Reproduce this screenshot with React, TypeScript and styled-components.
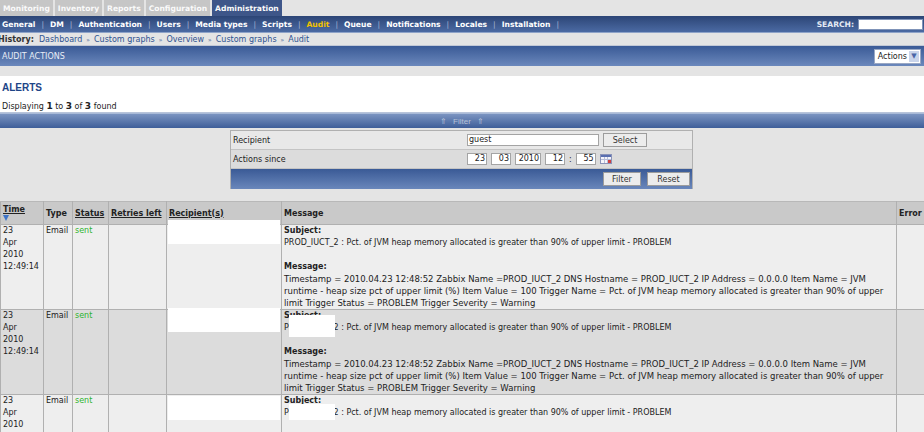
import React from 'react';
import styled, { createGlobalStyle } from 'styled-components';

const GlobalStyle = createGlobalStyle`
  html, body { margin: 0; padding: 0; }
  body {
    background: #e4e4e4;
    font-family: "DejaVu Sans", Verdana, sans-serif;
    font-size: 8px;
    color: #222;
    width: 924px;
    height: 432px;
    overflow: hidden;
  }
`;

const TabBar = styled.div`
  display: flex;
  gap: 2px;
  height: 16px;
  font-size: 7.6px;
`;

const Tab = styled.div<{ $active?: boolean }>`
  display: flex;
  align-items: center;
  padding: 0 3px;
  font-weight: bold;
  color: #fafafa;
  background: ${(p) => (p.$active ? '#3e5689' : '#c6c6c6')};
`;

const MainNav = styled.div`
  display: flex;
  align-items: center;
  height: 16px;
  padding-left: 2px;
  font-size: 7.6px;
  background: linear-gradient(#2c4576, #4b6aa3);
  border-bottom: 1px solid #8ea3c8;
`;

const NavItem = styled.span<{ $current?: boolean }>`
  font-weight: bold;
  color: ${(p) => (p.$current ? '#f2c200' : '#ffffff')};
`;

const NavSep = styled.span`
  color: #a9b7d4;
  margin: 0 6px;
`;

const Search = styled.div`
  margin-left: auto;
  display: flex;
  align-items: center;
  gap: 4px;
  font-weight: bold;
  color: #e4eaf4;
`;

const SearchInput = styled.input`
  width: 63px;
  height: 9px;
  padding: 0;
  margin: 0 1px 0 0;
  border: 1px solid #7f93b8;
  background: #fff;
`;

const HistoryBar = styled.div`
  display: flex;
  align-items: center;
  height: 12px;
  border-bottom: 1px solid #c2c8d6;
`;

const HistoryLabel = styled.span`
  font-weight: bold;
  color: #333;
  margin-left: -2px;
  margin-right: 5px;
`;

const Crumb = styled.span`
  color: #2f5390;
`;

const CrumbSep = styled.span`
  color: #2f5390;
  margin: 0 4px;
  font-size: 6px;
`;

const PageHeader = styled.div`
  display: flex;
  align-items: center;
  justify-content: space-between;
  height: 20px;
  padding: 0 3px 0 2px;
  background: linear-gradient(#3a5a96, #6b88bc);
  color: #e8edf6;
`;

const ActionsSelect = styled.div`
  display: flex;
  align-items: center;
  gap: 2px;
  height: 13px;
  padding: 0 1px 0 3px;
  background: #fff;
  border: 1px solid #9aa8c4;
  color: #222;
`;

const SelectArrow = styled.span`
  display: flex;
  align-items: center;
  justify-content: center;
  width: 10px;
  height: 11px;
  background: #c9d4ea;
  color: #4a66a8;
  font-size: 7px;
`;

const Spacer = styled.div`
  height: 10px;
`;

const AlertsBox = styled.div`
  background: #fff;
  height: 36px;
  padding-left: 2px;
  border-bottom: 1px solid #b8c4da;
  display: flex;
  flex-direction: column;
`;

const AlertsTitle = styled.div`
  font-family: "Liberation Sans", Arial, sans-serif;
  font-weight: bold;
  font-size: 10px;
  color: #1d4587;
  margin-top: 6px;
  height: 13px;
`;

const Displaying = styled.div`
  margin-top: 6px;
  color: #222;
  b { font-size: 9px; }
`;

const FilterBar = styled.div`
  height: 14px;
  display: flex;
  align-items: center;
  justify-content: center;
  gap: 6px;
  background: linear-gradient(#7b94c1, #3e5e99);
  border-top: 1px solid #a9bad8;
  color: #b7c2d8;
  font-family: "Liberation Sans Narrow", "Liberation Sans", Arial, sans-serif;
  font-size: 8px;
`;

const FilterArea = styled.div`
  display: flex;
  justify-content: center;
  height: 68px;
`;

const FilterForm = styled.div`
  width: 461px;
  margin-left: -1px;
  margin-top: 2px;
  border: 1px solid #b0b0b0;
  display: grid;
  grid-template-columns: 235px 1fr;
  grid-auto-rows: 19px;
  align-self: flex-start;
`;

const FormLabel = styled.div<{ $alt?: boolean }>`
  display: flex;
  align-items: center;
  padding-left: 2px;
  background: ${(p) => (p.$alt ? '#dcdcdc' : '#e8e8e8')};
  border-bottom: 1px solid #c4c4c4;
`;

const FormValue = styled.div<{ $alt?: boolean }>`
  display: flex;
  align-items: center;
  gap: 4px;
  padding-left: 1px;
  background: ${(p) => (p.$alt ? '#dcdcdc' : '#e8e8e8')};
  border-bottom: 1px solid #c4c4c4;
`;

const TextBox = styled.div<{ $w: number }>`
  width: ${(p) => p.$w}px;
  height: 10px;
  line-height: 10px;
  background: #fff;
  border: 1px solid #a4a4a4;
  padding: 0 1px;
  color: #222;
`;

const DateBox = styled(TextBox)`
  text-align: right;
`;

const Button = styled.div<{ $w: number }>`
  width: ${(p) => p.$w}px;
  height: 12px;
  display: flex;
  align-items: center;
  justify-content: center;
  background: #ececec;
  border: 1px solid #9c9c9c;
  color: #333;
`;

const FormFooter = styled.div`
  grid-column: 1 / span 2;
  display: flex;
  align-items: center;
  justify-content: flex-end;
  gap: 6px;
  padding-right: 2px;
  background: linear-gradient(#3a5a96, #6a87bb);
  height: 20px;
`;

const Table = styled.table`
  margin-top: 5px;
  width: 924px;
  border-collapse: collapse;
  table-layout: fixed;
  font-size: 8px;
`;

const Th = styled.th<{ $link?: boolean }>`
  text-align: left;
  font-weight: bold;
  background: #c9c9c9;
  border: 1px solid #b0b0b0;
  border-top: 1px solid #b8b8b8;
  height: 22px;
  padding: 0 2px;
  vertical-align: middle;
  white-space: nowrap;
  overflow: hidden;
  text-decoration: ${(p) => (p.$link ? 'underline' : 'none')};
  color: #222;
`;

const SortArrow = styled.div`
  width: 0;
  height: 0;
  border-left: 3px solid transparent;
  border-right: 3px solid transparent;
  border-top: 6px solid #3f74c8;
  margin-top: 1px;
`;

const Tr = styled.tr<{ $alt?: boolean }>`
  background: ${(p) => (p.$alt ? '#dcdcdc' : '#eeeeee')};
`;

const Td = styled.td`
  border: 1px solid #b0b0b0;
  border-top: none;
  vertical-align: top;
  padding: 0 1px 0 2px;
  line-height: 12px;
  height: 84px;
  position: relative;
  overflow: visible;
`;

const Line = styled.div`
  white-space: nowrap;
`;

const BodyLine = styled.div`
  white-space: nowrap;
  font-size: 8.5px;
`;

const Sent = styled.span`
  color: #2fb42f;
`;

const MsgHead = styled.div`
  font-weight: bold;
`;

const MsgGap = styled.div`
  height: 12px;
`;

const Redact = styled.div<{ $top: number; $left: number; $w: number; $h: number }>`
  position: absolute;
  top: ${(p) => p.$top}px;
  left: ${(p) => p.$left}px;
  width: ${(p) => p.$w}px;
  height: ${(p) => p.$h}px;
  background: #fff;
`;

const Calendar = () => (
  <svg width="12" height="10" viewBox="0 0 12 10">
    <rect x="0.5" y="0.5" width="11" height="9" fill="#f4f4fa" stroke="#8a93b8" />
    <rect x="1" y="1" width="10" height="2" fill="#5a6fb0" />
    <line x1="1" y1="5.5" x2="11" y2="5.5" stroke="#b8bed8" />
    <line x1="4.5" y1="3" x2="4.5" y2="9" stroke="#b8bed8" />
    <line x1="7.5" y1="3" x2="7.5" y2="9" stroke="#b8bed8" />
    <rect x="8" y="6" width="3" height="3" fill="#d04040" />
  </svg>
);

const navItems = ['General', 'DM', 'Authentication', 'Users', 'Media types', 'Scripts', 'Audit', 'Queue', 'Notifications', 'Locales', 'Installation'];
const crumbs = ['Dashboard', 'Custom graphs', 'Overview', 'Custom graphs', 'Audit'];

const rows = [
  { alt: false, recTop: -5, subj: null as null | { top: number; h: number } },
  { alt: true, recTop: -2, subj: { top: 5, h: 22 } },
  { alt: false, recTop: 1, subj: { top: 9, h: 16 } },
];

export default function App() {
  return (
    <>
      <GlobalStyle />
      <TabBar>
        <Tab>Monitoring</Tab>
        <Tab>Inventory</Tab>
        <Tab>Reports</Tab>
        <Tab>Configuration</Tab>
        <Tab $active>Administration</Tab>
      </TabBar>
      <MainNav>
        {navItems.map((n) => (
          <React.Fragment key={n}>
            <NavItem $current={n === 'Audit'}>{n}</NavItem>
            <NavSep>|</NavSep>
          </React.Fragment>
        ))}
        <Search>
          SEARCH:
          <SearchInput />
        </Search>
      </MainNav>
      <HistoryBar>
        <HistoryLabel>History:</HistoryLabel>
        {crumbs.map((c, i) => (
          <React.Fragment key={i}>
            {i > 0 && <CrumbSep>»</CrumbSep>}
            <Crumb>{c}</Crumb>
          </React.Fragment>
        ))}
      </HistoryBar>
      <PageHeader>
        <span>AUDIT ACTIONS</span>
        <ActionsSelect>
          Actions
          <SelectArrow>▼</SelectArrow>
        </ActionsSelect>
      </PageHeader>
      <Spacer />
      <AlertsBox>
        <AlertsTitle>ALERTS</AlertsTitle>
        <Displaying>
          Displaying <b>1</b> to <b>3</b> of <b>3</b> found
        </Displaying>
      </AlertsBox>
      <FilterBar>
        <span>⇑</span>
        <span>Filter</span>
        <span>⇑</span>
      </FilterBar>
      <FilterArea>
        <FilterForm>
          <FormLabel>Recipient</FormLabel>
          <FormValue>
            <TextBox $w={128}>guest</TextBox>
            <Button $w={42}>Select</Button>
          </FormValue>
          <FormLabel $alt>Actions since</FormLabel>
          <FormValue $alt>
            <DateBox $w={16}>23</DateBox>
            <DateBox $w={16}>03</DateBox>
            <DateBox $w={22}>2010</DateBox>
            <DateBox $w={16}>12</DateBox>
            <span>:</span>
            <DateBox $w={16}>55</DateBox>
            <Calendar />
          </FormValue>
          <FormFooter>
            <Button $w={36}>Filter</Button>
            <Button $w={41}>Reset</Button>
          </FormFooter>
        </FilterForm>
      </FilterArea>
      <Table>
        <colgroup>
          <col style={{ width: 43 }} />
          <col style={{ width: 29 }} />
          <col style={{ width: 36 }} />
          <col style={{ width: 58 }} />
          <col style={{ width: 115 }} />
          <col style={{ width: 615 }} />
          <col style={{ width: 28 }} />
        </colgroup>
        <thead>
          <tr>
            <Th $link>
              Time
              <SortArrow />
            </Th>
            <Th>Type</Th>
            <Th $link>Status</Th>
            <Th $link>Retries left</Th>
            <Th $link>Recipient(s)</Th>
            <Th>Message</Th>
            <Th>Error</Th>
          </tr>
        </thead>
        <tbody>
          {rows.map((r, i) => (
            <Tr key={i} $alt={r.alt}>
              <Td>
                <Line>23</Line>
                <Line>Apr</Line>
                <Line>2010</Line>
                <Line>12:49:14</Line>
              </Td>
              <Td>Email</Td>
              <Td>
                <Sent>sent</Sent>
              </Td>
              <Td />
              <Td>
                <Redact $top={r.recTop} $left={1} $w={112} $h={24} />
              </Td>
              <Td>
                <MsgHead>Subject:</MsgHead>
                <Line>PROD_IUCT_2 : Pct. of JVM heap memory allocated is greater than 90% of upper limit - PROBLEM</Line>
                <MsgGap />
                <MsgHead>Message:</MsgHead>
                <BodyLine>Timestamp = 2010.04.23 12:48:52 Zabbix Name =PROD_IUCT_2 DNS Hostname = PROD_IUCT_2 IP Address = 0.0.0.0 Item Name = JVM</BodyLine>
                <BodyLine>runtime - heap size pct of upper limit (%) Item Value = 100 Trigger Name = Pct. of JVM heap memory allocated is greater than 90% of upper</BodyLine>
                <BodyLine>limit Trigger Status = PROBLEM Trigger Severity = Warning</BodyLine>
                {r.subj && <Redact $top={r.subj.top} $left={7} $w={46} $h={r.subj.h} />}
              </Td>
              <Td />
            </Tr>
          ))}
        </tbody>
      </Table>
    </>
  );
}
